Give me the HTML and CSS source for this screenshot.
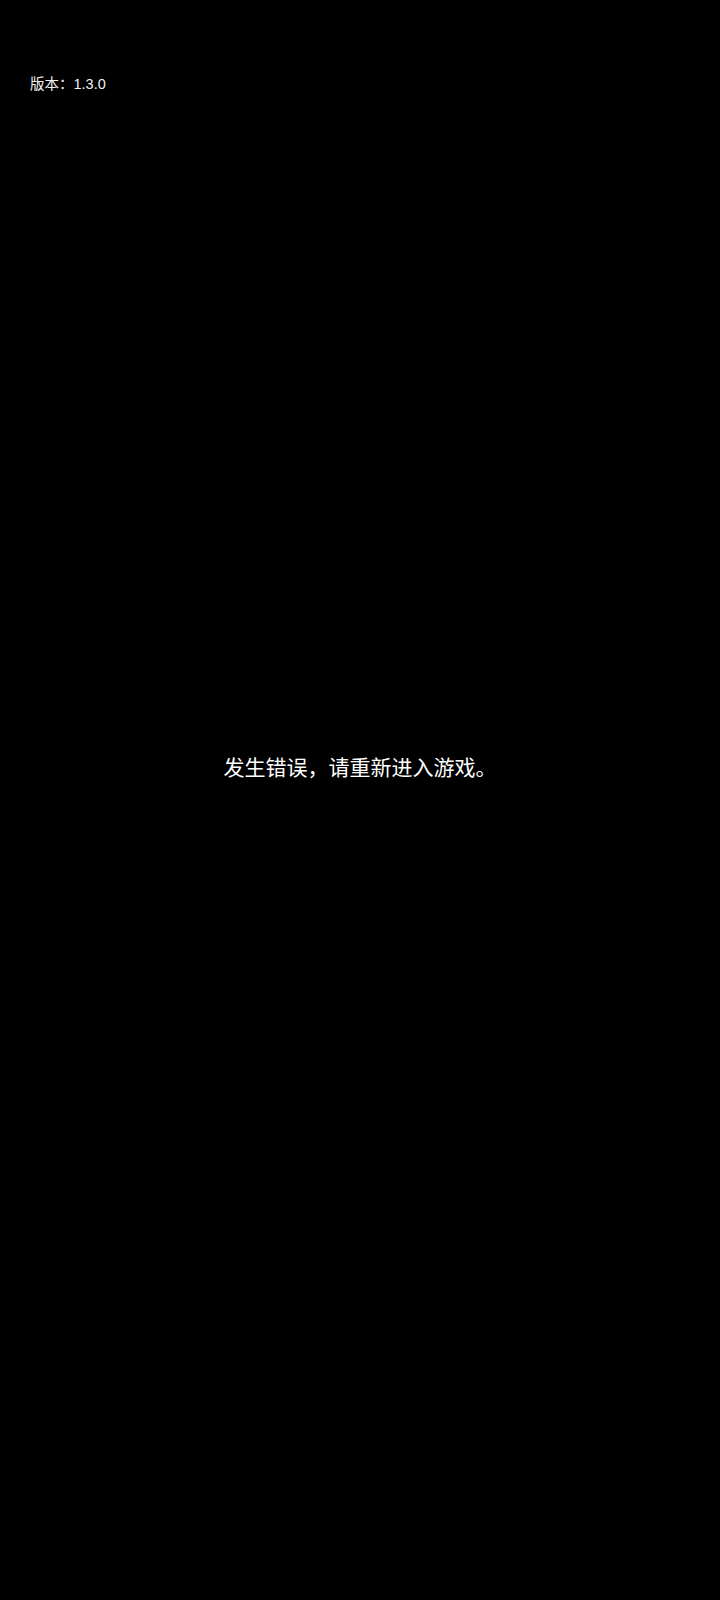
FILE: index.html
```html
<!DOCTYPE html>
<html lang="zh-CN">
<head>
<meta charset="utf-8">
<title>错误</title>
<link rel="stylesheet" href="styles.css">
</head>
<body>
<div class="screen">
  <div class="version">版本：1.3.0</div>
  <div class="message">发生错误，请重新进入游戏。</div>
</div>
</body>
</html>
```
FILE: styles.css
```css
html, body {
  margin: 0;
  padding: 0;
  background: #000;
}
.screen {
  width: 720px;
  height: 1600px;
  background: #000;
  color: #fff;
  font-family: "Liberation Sans", "Noto Sans CJK SC", sans-serif;
  display: flex;
  flex-direction: column;
}
.version {
  font-size: 14.5px;
  line-height: 20px;
  padding: 74px 0 0 30px;
  color: #f2f2f2;
}
.message {
  font-size: 21px;
  line-height: 30px;
  text-align: center;
  margin-top: 659px;
}
```
